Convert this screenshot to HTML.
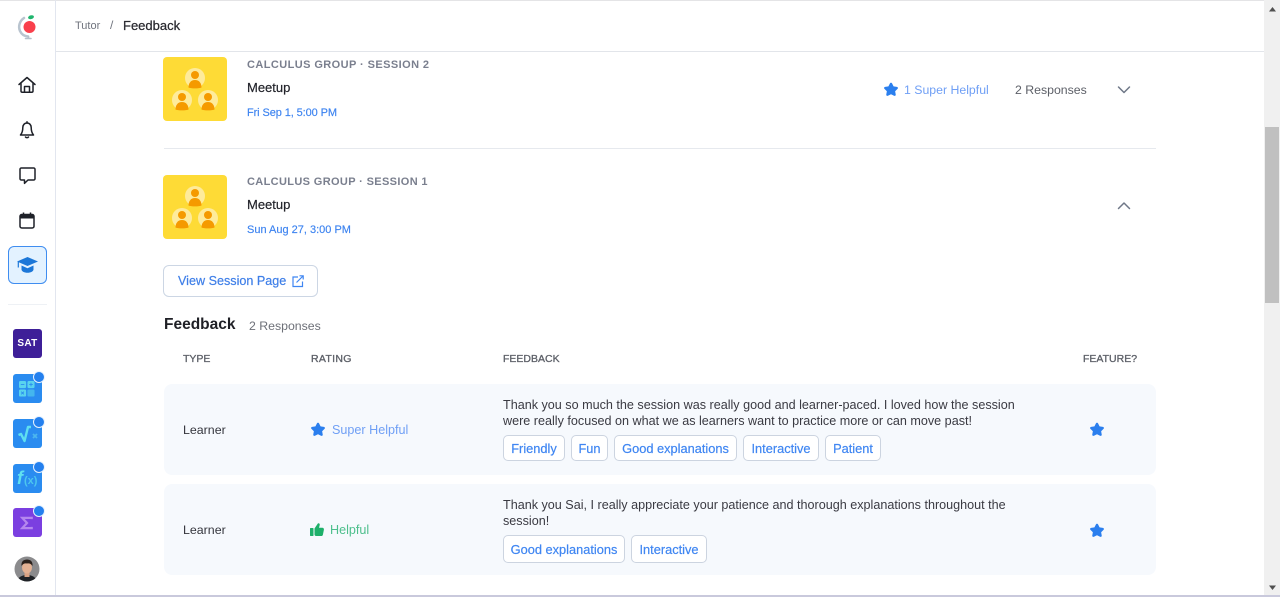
<!DOCTYPE html>
<html><head><meta charset="utf-8"><title>Feedback</title>
<style>
html,body{margin:0;padding:0;width:1280px;height:597px;overflow:hidden;background:#fff}
body{position:relative;font-family:"Liberation Sans",sans-serif;color:#2b2b33}
.t{position:absolute;white-space:nowrap;line-height:16px}
.b{position:absolute}
svg{position:absolute;overflow:visible}
.eyebrow{font-size:11px;font-weight:bold;color:#7a7f8e;letter-spacing:.42px}
.th{font-size:10.5px;color:#5d6068;-webkit-text-stroke:.3px #5d6068}
.tag{position:absolute;height:26px;box-sizing:border-box;border:1px solid #ccd4e0;border-radius:5px;background:#fff;color:#3f86f2;font-size:12.8px;line-height:25px;text-align:center;white-space:nowrap;-webkit-text-stroke:.2px #3f86f2}
.row{position:absolute;left:164px;width:992px;background:#f6f9fd;border-radius:8px}
.body{font-size:12.6px;color:#3a3a42}
.thumb{left:163px;width:64px;height:64px}
.date{font-size:11px;color:#3c83f0;-webkit-text-stroke:.15px #3c83f0}
.sub{font-size:12.3px}
</style></head><body>

<svg width="0" height="0" style="position:absolute"><defs>
<symbol id="star" viewBox="0 0 24 24"><path d="M12 1.200c.8 0 1.400.4 1.800 1.100l2.600 5.300 5.700.8c1.700.3 2.300 2.200 1.100 3.400l-4.100 4 1 5.700c.3 1.700-1.400 2.900-2.900 2.100L12 20.900l-5.200 2.700c-1.500.8-3.200-.4-2.900-2.100l1-5.700-4.100-4C-.4 10.600.2 8.700 1.900 8.400l5.700-.8 2.600-5.300c.4-.7 1-1.100 1.800-1.100z" fill="#2b7fee"/></symbol>
<symbol id="grp" viewBox="0 0 64 64">
<circle cx="32" cy="21" r="10" fill="#feeb9b"/><circle cx="32" cy="18" r="4" fill="#f59a00"/><path d="M25.500 30.500c0-4.500 2.500-7.500 6.500-7.500s6.500 3 6.500 7.500c-2 1.200-11 1.200-13 0z" fill="#f59a00"/>
<circle cx="19" cy="43" r="10" fill="#feeb9b"/><circle cx="19" cy="40" r="4" fill="#f59a00"/><path d="M12.500 52.500c0-4.500 2.500-7.500 6.500-7.500s6.500 3 6.500 7.500c-2 1.200-11 1.200-13 0z" fill="#f59a00"/>
<circle cx="45" cy="43" r="10" fill="#feeb9b"/><circle cx="45" cy="40" r="4" fill="#f59a00"/><path d="M38.500 52.500c0-4.500 2.500-7.500 6.500-7.500s6.500 3 6.500 7.500c-2 1.200-11 1.200-13 0z" fill="#f59a00"/>
</symbol>
</defs></svg>

<!-- top strip / bars -->
<div class="b" style="left:0;top:0;width:1280px;height:1px;background:#e4e4e6"></div>
<div class="b" style="left:55px;top:0;width:1px;height:597px;background:#e2e6ef"></div>
<div class="b" style="left:56px;top:51px;width:1208px;height:1px;background:#e2e5ea"></div>

<!-- logo -->
<svg style="left:16px;top:13px" width="24" height="30" viewBox="0 0 24 30">
<path d="M8 5C3.500 8 2 13.500 4 18c1.500 3.300 4.500 5.200 8 5.500" fill="none" stroke="#b9c4cf" stroke-width="2.500" stroke-linecap="round"/>
<path d="M9.500 25.500h5.500M12.500 23.500v2" fill="none" stroke="#b6c0cb" stroke-width="1.600" stroke-linecap="round"/>
<circle cx="13.500" cy="14" r="6" fill="#f9404c"/>
<ellipse cx="15" cy="4.200" rx="3" ry="1.900" transform="rotate(-15 15 4.200)" fill="#1fb56d"/>
</svg>

<!-- nav icons -->
<svg style="left:18px;top:76px" width="18" height="18" viewBox="0 0 18 18" fill="none" stroke="#1e2128" stroke-width="1.500" stroke-linejoin="round" stroke-linecap="round"><path d="M1 8.500 9 1.500l8 7"/><path d="M3 7.500V15c0 .8.500 1.300 1.300 1.300h9.400c.8 0 1.300-.5 1.300-1.300V7.500"/><path d="M6.500 16.300V10.500h5v5.800"/></svg>
<svg style="left:19px;top:121px" width="16" height="18" viewBox="0 0 16 18" fill="none" stroke="#1e2128" stroke-width="1.500" stroke-linejoin="round" stroke-linecap="round"><path d="M8 2C5.500 2 3.800 4 3.800 6.500c0 3.500-.6 5.500-2.300 7.500h13c-1.700-2-2.300-4-2.300-7.500C12.200 4 10.500 2 8 2z"/><path d="M8 .8V2M6.500 16c.8.900 2.200.9 3 0"/></svg>
<svg style="left:19px;top:167px" width="17" height="18" viewBox="0 0 17 18" fill="none" stroke="#1e2128" stroke-width="1.500" stroke-linejoin="round"><path d="M2.300 1h12.400c.7 0 1.300.6 1.300 1.300v9.400c0 .7-.6 1.300-1.300 1.300H9l-3.500 3.300V13H2.300C1.600 13 1 12.400 1 11.700V2.300C1 1.600 1.600 1 2.300 1z"/></svg>
<svg style="left:19px;top:212px" width="16" height="17" viewBox="0 0 16 17"><rect x="1" y="2.500" width="14" height="13.500" rx="1.800" fill="none" stroke="#1e2128" stroke-width="1.500"/><rect x="1" y="2.500" width="14" height="4" fill="#1e2128"/><path d="M4.500 .5v3M11.500 .5v3" stroke="#1e2128" stroke-width="1.500"/></svg>

<div class="b" style="left:8px;top:246px;width:39px;height:38px;box-sizing:border-box;border:1.500px solid #3f8df0;border-radius:6px;background:#e3f2ff"></div>
<svg style="left:17px;top:257px" width="21" height="17" viewBox="0 0 21 17"><path d="M10.500 0 21 4.500 10.500 9 0 4.500z" fill="#1c77d8"/><path d="M4.500 8.500v4c0 1.800 3 3.300 6 3.300s6-1.500 6-3.300v-4l-6 2.700z" fill="#1c77d8"/><path d="M1.300 5v5.500" stroke="#1c77d8" stroke-width="1.200"/></svg>

<div class="b" style="left:8px;top:304px;width:39px;height:1px;background:#eef1f5"></div>

<!-- app tiles -->
<div class="b" style="left:13px;top:329px;width:29px;height:29px;border-radius:3px;background:#3e1f98;color:#fff;font-size:10px;font-weight:bold;line-height:30px;text-align:center;letter-spacing:.3px">SAT</div>

<div class="b" style="left:13px;top:374px;width:29px;height:29px;border-radius:3px;background:#2a8cf0"></div>
<svg style="left:19px;top:381px" width="16" height="16" viewBox="0 0 18 18"><rect x="0" y="0" width="8" height="8" rx="1.500" fill="#59d3ee"/><rect x="9.500" y="0" width="8" height="8" rx="1.500" fill="#59d3ee"/><rect x="0" y="9.500" width="8" height="8" rx="1.500" fill="#59d3ee"/><rect x="9.500" y="9.500" width="8" height="8" rx="1.500" fill="#44b6ee"/><path d="M2 4h4M11.500 4h4M13.500 2v4M2.500 12l3 3M5.500 12l-3 3" stroke="#2a8cf0" stroke-width="1"/></svg>

<div class="b" style="left:13px;top:419px;width:29px;height:29px;border-radius:3px;background:#2a8cf0"></div>
<svg style="left:17px;top:424px" width="24" height="20" viewBox="0 0 24 20" fill="none"><path d="M1.500 11l2.500-1 3.500 7L11 3h3" stroke="#5fe0f0" stroke-width="2.400" stroke-linejoin="round"/><path d="M16 10l4 4M20 10l-4 4" stroke="#4cb6ee" stroke-width="1.800"/></svg>

<div class="b" style="left:13px;top:464px;width:29px;height:29px;border-radius:3px;background:#2a8cf0"></div>
<div class="t" style="left:17px;top:469px;font:italic bold 18px/19px 'Liberation Sans',sans-serif;color:#5fe0f0">f</div>
<div class="t" style="left:24px;top:473px;font-size:11px;font-weight:bold;line-height:16px;color:#4cc6ee">(x)</div>

<div class="b" style="left:13px;top:508px;width:29px;height:29px;border-radius:3px;background:#7b3fe0"></div>
<svg style="left:21px;top:516px" width="12" height="14" viewBox="0 0 14 15" fill="none"><path d="M12.500 3V1.500h-11L7 7.500l-5.500 6h11V12" stroke="#b587ee" stroke-width="2.600"/></svg>

<!-- notification dots -->
<div class="b" style="left:33px;top:371px;width:12px;height:12px;box-sizing:border-box;border:1px solid #e8f2fd;border-radius:50%;background:#2480ee"></div>
<div class="b" style="left:33px;top:416px;width:12px;height:12px;box-sizing:border-box;border:1px solid #e8f2fd;border-radius:50%;background:#2480ee"></div>
<div class="b" style="left:33px;top:461px;width:12px;height:12px;box-sizing:border-box;border:1px solid #e8f2fd;border-radius:50%;background:#2480ee"></div>
<div class="b" style="left:33px;top:505px;width:12px;height:12px;box-sizing:border-box;border:1px solid #e8f2fd;border-radius:50%;background:#2480ee"></div>

<!-- avatar -->
<svg style="left:14px;top:556px" width="26" height="26" viewBox="0 0 26 26"><defs><clipPath id="av"><circle cx="13" cy="13" r="12.500"/></clipPath></defs><g clip-path="url(#av)"><rect width="26" height="26" fill="#8b8b8d"/><path d="M3 26c1-5 5-7 10-7s9 2 10 7z" fill="#1f2226"/><rect x="10.500" y="15" width="5" height="6" fill="#d9a283"/><ellipse cx="13" cy="11.500" rx="5" ry="6" fill="#e3b193"/><path d="M7.500 10C7 5 10 3.500 13 3.500S19 5 18.500 10C17 7.500 15 7 13 7.500 11 7 9 7.500 7.500 10z" fill="#2b211c"/></g></svg>

<!-- breadcrumb -->
<div class="t" style="left:75px;top:18px;font-size:11px;color:#70747e">Tutor</div>
<div class="t" style="left:110px;top:17px;font-size:12px;color:#70747e">/</div>
<div class="t" style="left:123px;top:18px;font-size:13px;color:#2a2a30;-webkit-text-stroke:.25px #2a2a30">Feedback</div>

<!-- session 2 -->
<svg class="thumb" style="top:57px" width="64" height="64" viewBox="0 0 64 64"><rect width="64" height="64" rx="4" fill="#fedb36"/><use href="#grp" width="64" height="64"/></svg>
<div class="t eyebrow" style="left:247px;top:57px">CALCULUS GROUP · SESSION 2</div>
<div class="t" style="left:247px;top:80px;font-size:13px;color:#22232a;-webkit-text-stroke:.2px #22232a">Meetup</div>
<div class="t date" style="left:247px;top:105px;letter-spacing:-.1px">Fri Sep 1, 5:00 PM</div>

<svg style="left:884px;top:82px" width="14" height="14"><use href="#star" width="14" height="14"/></svg>
<div class="t sub" style="left:904px;top:82px;color:#6f9ff5">1 Super Helpful</div>
<div class="t sub" style="left:1015px;top:82px;color:#5d6068">2 Responses</div>
<svg style="left:1117px;top:85px" width="14" height="9" viewBox="0 0 14 9" fill="none" stroke="#6f7888" stroke-width="1.500" stroke-linecap="round" stroke-linejoin="round"><path d="M1.500 2 7 7.500 12.500 2"/></svg>

<div class="b" style="left:164px;top:148px;width:992px;height:1px;background:#e6e9ee"></div>

<!-- session 1 -->
<svg class="thumb" style="top:175px" width="64" height="64" viewBox="0 0 64 64"><rect width="64" height="64" rx="4" fill="#fedb36"/><use href="#grp" width="64" height="64"/></svg>
<div class="t eyebrow" style="left:247px;top:174px;letter-spacing:.36px">CALCULUS GROUP · SESSION 1</div>
<div class="t" style="left:247px;top:197px;font-size:13px;color:#22232a;-webkit-text-stroke:.2px #22232a">Meetup</div>
<div class="t date" style="left:247px;top:222px">Sun Aug 27, 3:00 PM</div>
<svg style="left:1117px;top:201px" width="14" height="9" viewBox="0 0 14 9" fill="none" stroke="#6f7888" stroke-width="1.500" stroke-linecap="round" stroke-linejoin="round"><path d="M1.500 7.500 7 2l5.500 5.500"/></svg>

<!-- button -->
<div class="b" style="left:163px;top:265px;width:155px;height:32px;box-sizing:border-box;border:1.500px solid #ccd6e4;border-radius:6px;background:#fff"></div>
<div class="t" style="left:178px;top:273px;font-size:12.6px;color:#3f7fe8;-webkit-text-stroke:.2px #3f7fe8">View Session Page</div>
<svg style="left:292px;top:275px" width="12" height="12" viewBox="0 0 12 12" fill="none" stroke="#3f86f2" stroke-width="1.200"><path d="M6 2H1v9.500h9.500V6.500"/><path d="M4.500 7.500 11 1M7.500 .8h3.700v3.700"/></svg>

<!-- feedback heading -->
<div class="t" style="left:164px;top:317px;font-size:15.5px;font-weight:bold;color:#1f2026">Feedback</div>
<div class="t sub" style="left:249px;top:318px;color:#6d7078">2 Responses</div>

<div class="t th" style="left:183px;top:351px">TYPE</div>
<div class="t th" style="left:311px;top:351px;letter-spacing:.3px">RATING</div>
<div class="t th" style="left:503px;top:351px">FEEDBACK</div>
<div class="t th" style="left:1083px;top:351px">FEATURE?</div>

<!-- row 1 -->
<div class="row" style="top:384px;height:91px"></div>
<div class="t" style="left:183px;top:422px;font-size:12.4px;color:#35363d">Learner</div>
<svg style="left:311px;top:422px" width="14" height="14"><use href="#star" width="14" height="14"/></svg>
<div class="t" style="left:332px;top:422px;font-size:12.6px;color:#6f9ff5">Super Helpful</div>
<div class="t body" style="left:503px;top:397px">Thank you so much the session was really good and learner-paced. I loved how the session</div>
<div class="t body" style="left:503px;top:413px">were really focused on what we as learners want to practice more or can move past!</div>
<div class="tag" style="left:503px;top:435px;width:62px">Friendly</div>
<div class="tag" style="left:571px;top:435px;width:37px">Fun</div>
<div class="tag" style="left:614px;top:435px;width:123px">Good explanations</div>
<div class="tag" style="left:743px;top:435px;width:76px">Interactive</div>
<div class="tag" style="left:825px;top:435px;width:56px">Patient</div>
<svg style="left:1090px;top:422px" width="14" height="14"><use href="#star" width="14" height="14"/></svg>

<!-- row 2 -->
<div class="row" style="top:484px;height:91px"></div>
<div class="t" style="left:183px;top:522px;font-size:12.4px;color:#35363d">Learner</div>
<svg style="left:310px;top:523px" width="14" height="13" viewBox="0 0 14 13"><rect x="0" y="5" width="3.500" height="8" rx=".6" fill="#1eb06a"/><path d="M4.500 5.500 7.500 1c.3-.6 1-.9 1.500-.6.700.3.900 1 .7 1.700L9 4.800h3.400c1 0 1.700.9 1.500 1.900l-1 5c-.2.800-.8 1.300-1.600 1.300H6c-.8 0-1.500-.7-1.500-1.500z" fill="#1eb06a"/></svg>
<div class="t" style="left:330px;top:522px;font-size:12.6px;color:#4dbf8c">Helpful</div>
<div class="t body" style="left:503px;top:497px">Thank you Sai, I really appreciate your patience and thorough explanations throughout the</div>
<div class="t body" style="left:503px;top:513px">session!</div>
<div class="tag" style="left:503px;top:535px;width:122px;height:28px;line-height:27px">Good explanations</div>
<div class="tag" style="left:631px;top:535px;width:76px;height:28px;line-height:27px">Interactive</div>
<svg style="left:1090px;top:523px" width="14" height="14"><use href="#star" width="14" height="14"/></svg>

<!-- scrollbar -->
<div class="b" style="left:1264px;top:0;width:16px;height:597px;background:#f0f0f0"></div>
<div class="b" style="left:1265px;top:127px;width:14px;height:176px;background:#c0c0c0"></div>
<svg style="left:1268px;top:7px" width="9" height="5"><path d="M4.500 0 8 4.500H1z" fill="#505050"/></svg>
<svg style="left:1268px;top:585px" width="9" height="5"><path d="M1 .5h7L4.500 5z" fill="#505050"/></svg>
<div class="b" style="left:0;top:595px;width:1280px;height:2px;background:#c9c9dc"></div>
</body></html>
